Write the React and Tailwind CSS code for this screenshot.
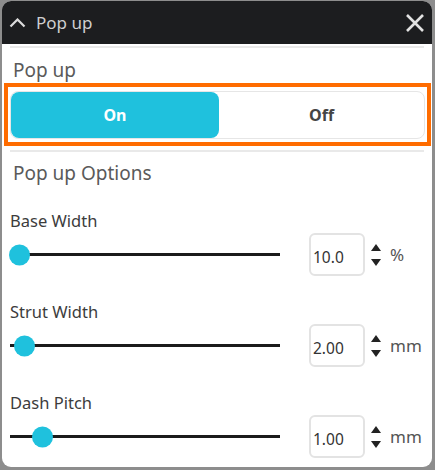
const settings = [
  { label: "Base Width", value: "10.0", unit: "%", thumb: -1 },
  { label: "Strut Width", value: "2.00", unit: "mm", thumb: 4 },
  { label: "Dash Pitch", value: "1.00", unit: "mm", thumb: 22 },
];

function Spinner() {
  return (
    <svg width="10" height="22" viewBox="0 0 10 22" className="shrink-0">
      <path d="M5 0 L10 7 L0 7 Z" fill="#222" />
      <path d="M0 15 L10 15 L5 22 Z" fill="#222" />
    </svg>
  );
}

function SettingRow({ item }) {
  return (
    <div className="mt-[26px]">
      <div className="pl-[8px] text-[16.5px] leading-[20px] text-[#3c3c3c]">{item.label}</div>
      <div className="mt-[2px] flex h-[43px] items-center">
        <div className="relative ml-[8px] h-[3px] w-[270px] bg-[#1b1b1b]">
          <div
            className="absolute top-1/2 h-[21px] w-[21px] -translate-y-1/2 rounded-full bg-[#1fc1dd]"
            style={{ left: item.thumb }}
          />
        </div>
        <div className="ml-[29px] flex h-[43px] w-[56px] items-center rounded-[6px] border-2 border-[#e3e3e3] pl-[2px] pt-[6px] text-[15.5px] text-[#333]">
          {item.value}
        </div>
        <div className="ml-[6px]">
          <Spinner />
        </div>
        <div className="ml-[9px] text-[17px] text-[#555]">{item.unit}</div>
      </div>
    </div>
  );
}

export default function App() {
  return (
    <div
      className="h-[470px] w-[435px] bg-[#8d8d8d] pb-[3px] pl-[2px] pr-[3px] pt-[1px]"
      style={{ fontFamily: '"Noto Sans", "Liberation Sans", sans-serif' }}
    >
      <div className="flex h-full flex-col overflow-hidden rounded-[9px] bg-white">
        {/* header */}
        <div className="flex h-[43px] items-center bg-[#1c1d1f] pl-[7px] pr-[7px]">
          <svg width="17" height="10" viewBox="0 0 17 10" className="mt-[1px]">
            <path d="M1.5 8.5 L8.5 1.5 L15.5 8.5" fill="none" stroke="#dcdcdc" strokeWidth="2.2" />
          </svg>
          <span className="ml-[10px] text-[17px] text-[#cfcfcf]">Pop up</span>
          <svg width="20" height="20" viewBox="0 0 20 20" className="ml-auto">
            <path d="M2 2 L18 18 M18 2 L2 18" stroke="#e2e2e2" strokeWidth="2.6" />
          </svg>
        </div>
        <div className="mx-[8px] mt-[2px] h-[2px] bg-[#e9e9e9]" />

        <div className="mt-[10px] pl-[11px] text-[19px] leading-[24px] text-[#5a5a5a]">Pop up</div>

        {/* toggle */}
        <div className="ml-[2px] mr-[1px] mt-[1px] border-[4px] border-[#ff6c00] px-[2px] pb-[3px] pt-[4px]">
          <div className="flex h-[48px] rounded-[8px] border border-[#e6e6e6]">
            <button className="flex w-[208px] items-center justify-center rounded-[8px] bg-[#1fc1dd] text-[16px] font-bold text-white">
              On
            </button>
            <button className="flex flex-1 items-center justify-center text-[16px] font-bold text-[#444]">
              Off
            </button>
          </div>
        </div>
        <div className="mx-[8px] mt-[4px] h-[2px] bg-[#e9e9e9]" />

        <div className="mt-[9px] pl-[11px] text-[19px] leading-[24px] text-[#5a5a5a]">Pop up Options</div>

        {settings.map((item) => (
          <SettingRow key={item.label} item={item} />
        ))}
      </div>
    </div>
  );
}
